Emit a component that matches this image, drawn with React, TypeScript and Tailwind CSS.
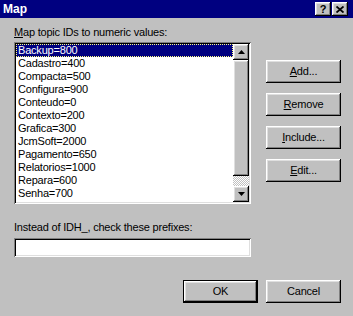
import React from 'react';

const raised =
  'shadow-[inset_-1px_-1px_0_#000,inset_1px_1px_0_#fff,inset_-2px_-2px_0_#808080,inset_2px_2px_0_#dfdfdf]';
const sunken =
  'shadow-[inset_1px_1px_0_#808080,inset_-1px_-1px_0_#fff,inset_2px_2px_0_#000,inset_-2px_-2px_0_#dfdfdf]';

const items = [
  'Backup=800',
  'Cadastro=400',
  'Compacta=500',
  'Configura=900',
  'Conteudo=0',
  'Contexto=200',
  'Grafica=300',
  'JcmSoft=2000',
  'Pagamento=650',
  'Relatorios=1000',
  'Repara=600',
  'Senha=700',
  'Sistema=100',
];

const Button: React.FC<{ children: React.ReactNode; isDefault?: boolean }> = ({ children, isDefault }) => (
  <div
    className={
      'w-[75px] h-[23px] flex items-center justify-center bg-[#c0c0c0] text-black ' +
      (isDefault
        ? 'shadow-[inset_0_0_0_1px_#000,inset_-2px_-2px_0_#000,inset_2px_2px_0_#fff,inset_-3px_-3px_0_#808080,inset_3px_3px_0_#dfdfdf]'
        : raised)
    }
  >
    {children}
  </div>
);

const Arrow: React.FC<{ up?: boolean }> = ({ up }) => (
  <div className={'w-[16px] h-[16px] flex items-center justify-center bg-[#c0c0c0] ' + raised}>
    <svg width="7" height="4" viewBox="0 0 7 4" className="block">
      {up ? <path d="M3.5 0 L7 4 L0 4 Z" fill="#000" /> : <path d="M0 0 L7 0 L3.5 4 Z" fill="#000" />}
    </svg>
  </div>
);

export default function App() {
  return (
    <div
      className="w-[353px] h-[316px] bg-[#c0c0c0] overflow-hidden text-[11px] tracking-[-0.2px] text-black"
      style={{ fontFamily: '"Liberation Sans", Arial, sans-serif' }}
    >
      {/* title bar */}
      <div className="h-[18px] bg-[#000080] flex items-center justify-between pl-[3px] pr-[5px]">
        <span className="text-white font-bold text-[12px] tracking-normal leading-[18px]">Map</span>
        <div className="flex items-center gap-[1px]">
          <div className={'w-[16px] h-[14px] flex items-center justify-center bg-[#c0c0c0] ' + raised}>
            <span className="font-bold text-[11px] leading-none text-black">?</span>
          </div>
          <div className={'w-[16px] h-[14px] flex items-center justify-center bg-[#c0c0c0] ' + raised}>
            <svg width="8" height="7" viewBox="0 0 8 7" className="block">
              <path d="M0.5 0.5 L7.5 6.5 M7.5 0.5 L0.5 6.5" stroke="#000" strokeWidth="1.8" />
            </svg>
          </div>
        </div>
      </div>

      <div className="flex pl-[14px] pr-[12px]">
        {/* left column */}
        <div className="w-[237px] flex flex-col">
          <div className="mt-[8px] h-[13px] leading-[13px]">
            <u>M</u>ap topic IDs to numeric values:
          </div>
          <div className={'mt-[3px] h-[162px] bg-white flex p-[2px] ' + sunken}>
            <div className="flex-1 flex flex-col overflow-hidden">
              {items.map((it, i) => (
                <div
                  key={it}
                  className={
                    'h-[13px] shrink-0 leading-[13px] pl-[2px] ' +
                    (i === 0 ? 'bg-[#000080] text-white outline-1 outline-dotted outline-[#ffff80] -outline-offset-1' : '')
                  }
                >
                  {it}
                </div>
              ))}
            </div>
            <div className="w-[16px] flex flex-col">
              <Arrow up />
              <div className={'h-[116px] bg-[#c0c0c0] ' + raised} />
              <div className="flex-1 bg-[image:repeating-conic-gradient(#fff_0_25%,#c0c0c0_0_50%)] bg-[length:2px_2px]" />
              <Arrow />
            </div>
          </div>
          <div className="mt-[17px] h-[13px] leading-[13px]">Instead of IDH_, check these prefixes:</div>
          <div className={'mt-[4px] h-[19px] bg-white ' + sunken} />
        </div>

        {/* right column */}
        <div className="ml-[15px] mt-[42px] flex flex-col gap-[10px]">
          <Button>
            <u>A</u>dd...
          </Button>
          <Button>
            <u>R</u>emove
          </Button>
          <Button>
            <u>I</u>nclude...
          </Button>
          <Button>
            <u>E</u>dit...
          </Button>
        </div>
      </div>

      <div className="flex justify-end gap-[8px] pr-[12px] mt-[23px]">
        <Button isDefault>OK</Button>
        <Button>Cancel</Button>
      </div>
    </div>
  );
}
